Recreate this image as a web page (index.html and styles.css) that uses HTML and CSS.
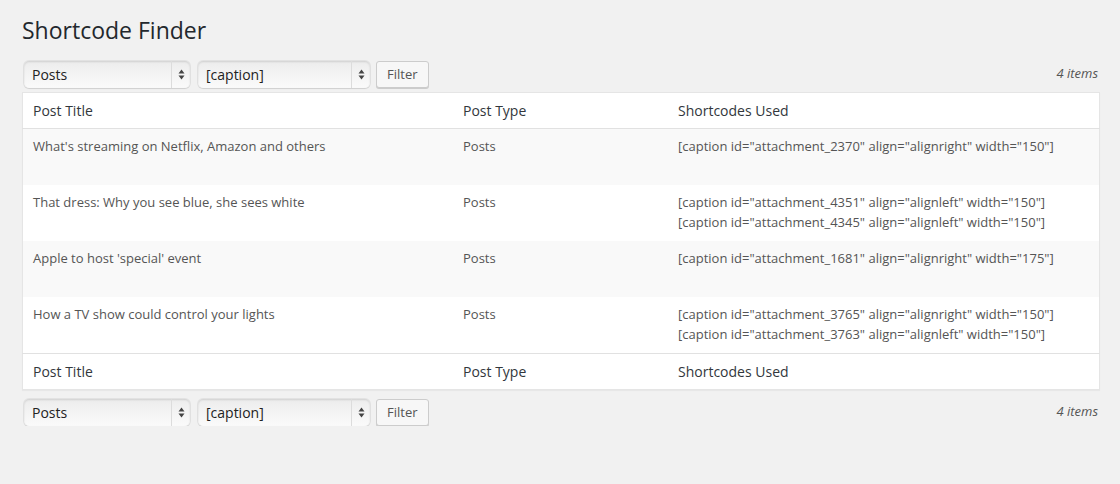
FILE: index.html
```html
<!DOCTYPE html>
<html lang="en">
<head>
<meta charset="utf-8">
<title>Shortcode Finder</title>
<link rel="stylesheet" href="styles.css">
</head>
<body>
<div class="wrap">
  <h1 class="page-title">Shortcode Finder</h1>

  <div class="tablenav">
    <div class="filters">
      <div class="select sel-type">
        <span class="sel-label">Posts</span>
        <span class="sel-arrow"><svg width="7" height="11" viewBox="0 0 7 11"><path d="M3.5 0.5 L6.5 4.5 H0.5 Z M3.5 10.5 L6.5 6.5 H0.5 Z" fill="#444"/></svg></span>
      </div>
      <div class="select sel-code">
        <span class="sel-label">[caption]</span>
        <span class="sel-arrow"><svg width="7" height="11" viewBox="0 0 7 11"><path d="M3.5 0.5 L6.5 4.5 H0.5 Z M3.5 10.5 L6.5 6.5 H0.5 Z" fill="#444"/></svg></span>
      </div>
      <button class="button" type="button">Filter</button>
    </div>
    <span class="num-items">4 items</span>
  </div>

  <table class="list-table">
    <thead>
      <tr>
        <th class="col-title">Post Title</th>
        <th class="col-type">Post Type</th>
        <th class="col-codes">Shortcodes Used</th>
      </tr>
    </thead>
    <tbody>
      <tr class="alt">
        <td>What's streaming on Netflix, Amazon and others</td>
        <td>Posts</td>
        <td>[caption id="attachment_2370" align="alignright" width="150"]</td>
      </tr>
      <tr>
        <td>That dress: Why you see blue, she sees white</td>
        <td>Posts</td>
        <td>[caption id="attachment_4351" align="alignleft" width="150"]<br>[caption id="attachment_4345" align="alignleft" width="150"]</td>
      </tr>
      <tr class="alt">
        <td>Apple to host 'special' event</td>
        <td>Posts</td>
        <td>[caption id="attachment_1681" align="alignright" width="175"]</td>
      </tr>
      <tr>
        <td>How a TV show could control your lights</td>
        <td>Posts</td>
        <td>[caption id="attachment_3765" align="alignright" width="150"]<br>[caption id="attachment_3763" align="alignleft" width="150"]</td>
      </tr>
    </tbody>
    <tfoot>
      <tr>
        <th class="col-title">Post Title</th>
        <th class="col-type">Post Type</th>
        <th class="col-codes">Shortcodes Used</th>
      </tr>
    </tfoot>
  </table>

  <div class="tablenav bottom">
    <div class="filters">
      <div class="select sel-type">
        <span class="sel-label">Posts</span>
        <span class="sel-arrow"><svg width="7" height="11" viewBox="0 0 7 11"><path d="M3.5 0.5 L6.5 4.5 H0.5 Z M3.5 10.5 L6.5 6.5 H0.5 Z" fill="#444"/></svg></span>
      </div>
      <div class="select sel-code">
        <span class="sel-label">[caption]</span>
        <span class="sel-arrow"><svg width="7" height="11" viewBox="0 0 7 11"><path d="M3.5 0.5 L6.5 4.5 H0.5 Z M3.5 10.5 L6.5 6.5 H0.5 Z" fill="#444"/></svg></span>
      </div>
      <button class="button" type="button">Filter</button>
    </div>
    <span class="num-items">4 items</span>
  </div>
</div>
</body>
</html>
```

FILE: styles.css
```css
html, body {
  margin: 0;
  padding: 0;
  background: #f1f1f1;
}

body {
  font-family: "Open Sans", "Liberation Sans", sans-serif;
  font-size: 13px;
  color: #444;
}

.wrap {
  padding: 16px 20px 0 22px;
}

.page-title {
  margin: 0;
  font-size: 23px;
  font-weight: 400;
  line-height: 29px;
  color: #23282d;
}

.tablenav {
  display: flex;
  align-items: center;
  justify-content: space-between;
  height: 28px;
  margin: 15px 0 4px 0;
}

.tablenav.bottom {
  margin: 8px 0 0 0;
}

.filters {
  display: flex;
  align-items: center;
  padding-left: 2px;
}

.select {
  display: flex;
  align-items: stretch;
  height: 27px;
  box-sizing: border-box;
  border-radius: 5px;
  background: linear-gradient(to bottom, #ececec 0%, #f3f3f3 45%, #fafafa 100%);
  box-shadow: inset 0 1px 2px rgba(0,0,0,0.12), 0 0 0 1px rgba(0,0,0,0.06), 0 1px 1px rgba(0,0,0,0.08);
  color: #222;
  font-size: 14px;
  margin-right: 8px;
}

.sel-type { width: 166px; }
.sel-code { width: 172px; margin-right: 6px; }

.sel-label {
  flex: 1;
  display: flex;
  align-items: center;
  padding-left: 8px;
  line-height: 27px;
}

.sel-arrow {
  width: 18px;
  display: flex;
  align-items: center;
  justify-content: center;
  border-left: 1px solid #dcdcdc;
}

.button {
  height: 27px;
  box-sizing: border-box;
  padding: 0 10px;
  font-family: "Open Sans", "Liberation Sans", sans-serif;
  font-size: 13px;
  color: #555;
  background: #f7f7f7;
  border: 1px solid #cccccc;
  border-radius: 3px;
  box-shadow: 0 1px 0 #ccc;
  line-height: 25px;
  margin-top: 1px;
}

.num-items {
  font-style: italic;
  color: #555;
  font-size: 13px;
  margin-right: 2px;
  margin-top: -2px;
}

.list-table {
  width: 1078px;
  border-collapse: collapse;
  background: #fff;
  border: 1px solid #e5e5e5;
  box-shadow: 0 1px 1px rgba(0,0,0,0.04);
  table-layout: fixed;
}

.list-table th {
  text-align: left;
  font-weight: 400;
  font-size: 14px;
  color: #32373c;
  padding: 8px 10px;
  height: 19px;
  line-height: 19px;
}

.list-table thead th {
  border-bottom: 1px solid #e1e1e1;
}

.list-table tfoot th {
  border-top: 1px solid #e1e1e1;
}

.col-title { width: 410px; }
.col-type { width: 195px; }

.list-table td {
  vertical-align: top;
  padding: 7px 10px 8px 10px;
  height: 41px;
  line-height: 20px;
  font-size: 13px;
  color: #555;
}

.list-table tr.alt td {
  background: #f9f9f9;
}
```
